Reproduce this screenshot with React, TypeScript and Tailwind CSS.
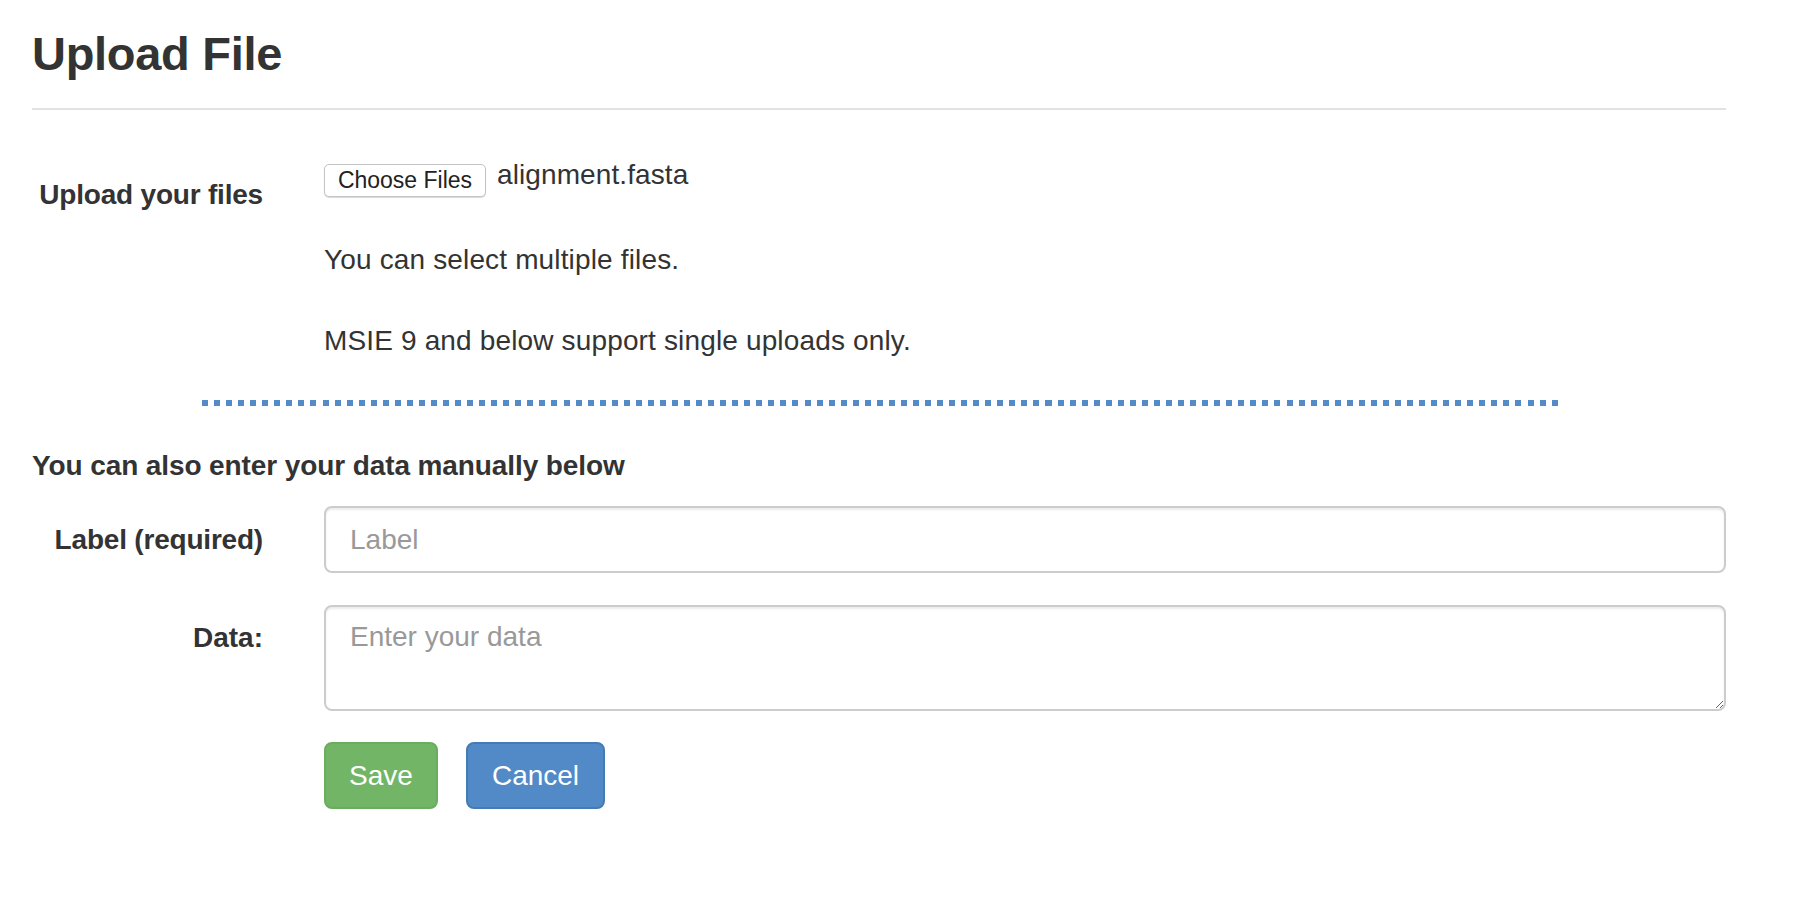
export default function App() {
  return (
    <div className="w-[1804px] min-h-[906px] bg-white text-[#333] font-['Liberation_Sans',Arial,sans-serif]">
      <div className="ml-[32px] w-[1694px]">
        {/* Title */}
        <h3 className="pt-[28px] text-[47px] leading-[52px] font-bold tracking-[-0.3px]">Upload File</h3>
        <div className="mt-[28px] h-[2px] bg-[#e2e2e2]" />

        {/* File upload */}
        <div className="mt-[48px] grid grid-cols-[231px_1fr] gap-x-[61px]">
          <label className="text-right pt-[17px] text-[28px] leading-[40px] font-bold tracking-[-0.2px]">Upload your files</label>
          <div>
            <div className="flex h-[40px] items-start">
              <button className="mt-[6px] h-[33px] w-[162px] rounded-[5px] border border-[#c4c4c4] bg-white text-[23px] leading-[31px] text-[#222] shadow-[0_1px_1px_rgba(0,0,0,0.15)]">
                Choose Files
              </button>
              <span className="ml-[11px] text-[28px] leading-[34px] tracking-[0.1px]">alignment.fasta</span>
            </div>
            <p className="mt-[42px] text-[28px] leading-[40px] tracking-[0.15px]">You can select multiple files.</p>
            <p className="mt-[41px] text-[28px] leading-[40px] tracking-[0.15px]">MSIE 9 and below support single uploads only.</p>
          </div>
        </div>

        {/* Divider */}
        <div className="mt-[39px] ml-[170px] h-[6px] w-[1356px] bg-[repeating-linear-gradient(to_right,#538bc7_0px,#538bc7_6px,transparent_6px,transparent_12.05px)]" />

        {/* Manual entry */}
        <h4 className="mt-[40px] text-[28px] leading-[40px] font-bold tracking-[-0.1px]">You can also enter your data manually below</h4>

        <div className="mt-[20px] grid grid-cols-[231px_1fr] gap-x-[61px] gap-y-[32px]">
          <label className="text-right pt-[14px] text-[28px] leading-[40px] font-bold tracking-[-0.2px]">Label (required)</label>
          <input
            type="text"
            placeholder="Label"
            className="h-[67px] w-full rounded-[8px] border-2 border-[#cccccc] px-[24px] text-[28px] text-[#555] placeholder:text-[#999] shadow-[inset_0_2px_2px_rgba(0,0,0,0.075)] outline-none"
          />

          <label className="text-right pt-[13px] text-[28px] leading-[40px] font-bold">Data:</label>
          <textarea
            placeholder="Enter your data"
            className="block h-[106px] w-full rounded-[8px] border-2 border-[#cccccc] px-[24px] pt-[10px] text-[28px] leading-[40px] text-[#555] placeholder:text-[#999] shadow-[inset_0_2px_2px_rgba(0,0,0,0.075)] outline-none"
          />

          <div />
          <div className="-mt-[1px] flex gap-[28px]">
            <button className="h-[67px] w-[114px] rounded-[8px] border-2 border-[#69ad5d] bg-[#72b567] text-[28px] text-white">
              Save
            </button>
            <button className="h-[67px] w-[139px] rounded-[8px] border-2 border-[#447ab6] bg-[#518ac6] text-[28px] text-white">
              Cancel
            </button>
          </div>
        </div>
      </div>
    </div>
  );
}
